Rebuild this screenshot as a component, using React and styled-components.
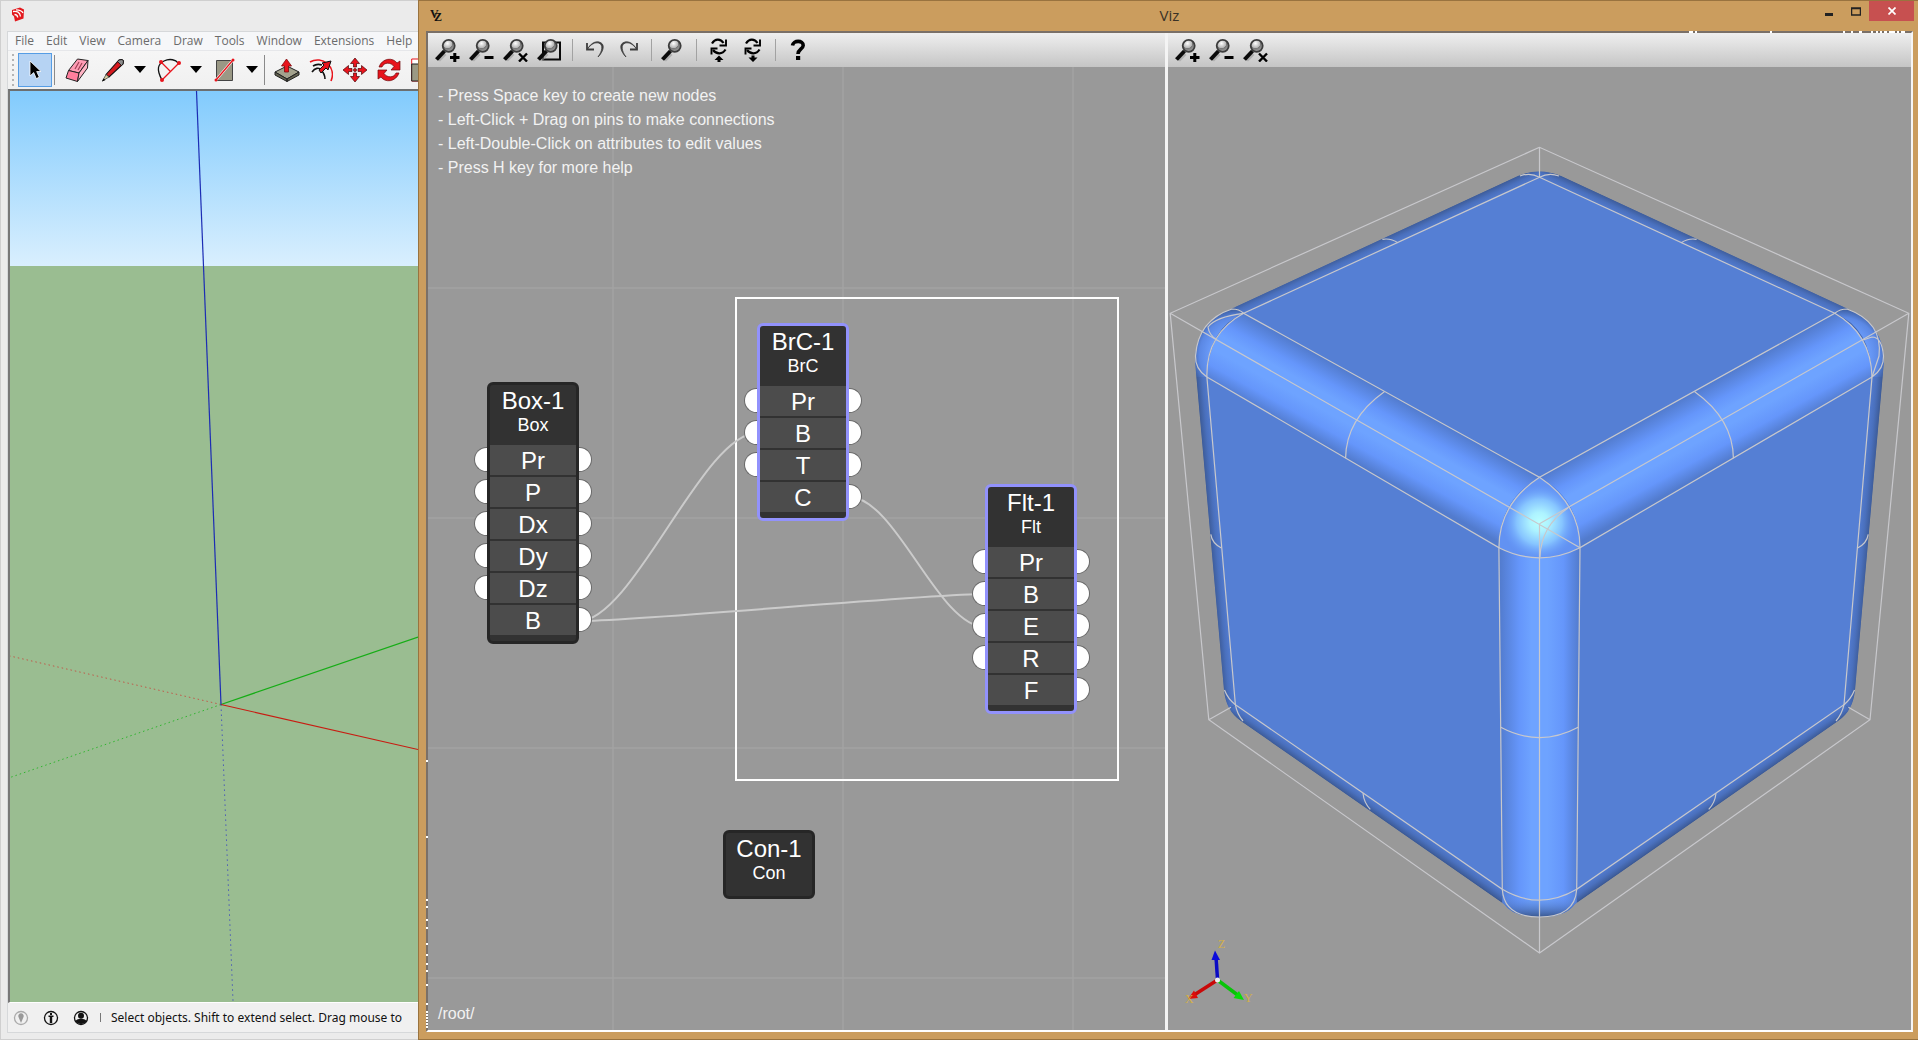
import React from 'react';
import styled, { createGlobalStyle } from 'styled-components';

const GlobalStyle = createGlobalStyle`
  * { box-sizing: border-box; }
  html, body, #root { height: 100%; }
  body { margin: 0; overflow: hidden; background: #ebebeb; }
  button { font: inherit; border: 0; padding: 0; background: none; color: inherit; }
  svg { display: block; flex: none; }
`;

const Desktop = styled.div`
  height: 100vh;
  display: grid;
  grid-template-columns: 418px minmax(0, 1fr);
`;

/* ---------- modelling window ---------- */

const ModelWindow = styled.section`
  min-width: 0;
  overflow: hidden;
  display: flex;
  flex-direction: column;
  padding: 0 0 6px 6px;
  background: #ebebeb;
  border: 1px solid #cfcfcf;
  border-right: 0;
  font-family: 'Open Sans', 'Noto Sans', sans-serif;
`;
const ModelTitle = styled.header`
  flex: 0 0 30px;
  padding: 6px 4px;
`;
const ModelBody = styled.div`
  flex: 1;
  min-height: 0;
  display: flex;
  flex-direction: column;
  border: 1px solid #d6d8da;
  border-right: 0;
  background: #f0f0f0;
`;
const MenuBar = styled.nav`
  flex: 0 0 19px;
  display: flex;
  align-items: center;
  gap: 12px;
  padding-left: 7px;
  background: #f6f7f9;
  border-bottom: 1px solid #e6e7ea;
`;
const MenuItem = styled.button`
  font-size: 12px;
  line-height: 18px;
  color: #6b6b6b;
  white-space: nowrap;
`;
const ModelToolbar = styled.div`
  flex: 0 0 38px;
  display: flex;
  align-items: center;
  gap: 2px;
  padding-left: 4px;
  background: linear-gradient(#f6f6f6, #f0f0f0);
  overflow: hidden;
`;
const Grip = styled.span`
  flex: 0 0 4px;
  height: 32px;
  background: repeating-linear-gradient(#b4b4b4 0 2px, transparent 2px 5px) 0 0 / 2px 100% no-repeat;
`;
const ToolGroup = styled.div`
  display: flex;
  flex: none;
`;
const Tool = styled.button`
  width: ${(p) => (p.$narrow ? 20 : 34)}px;
  height: 34px;
  flex: none;
  display: grid;
  place-items: center;
  background: ${(p) => (p.$active ? '#b6d3f3' : 'none')};
  border: ${(p) => (p.$active ? '1px solid #569de5' : '0')};
`;
const ToolDivider = styled.span`
  flex: 0 0 4px;
  height: 30px;
  border-left: 1px solid #8a8a8a;
`;
const Viewport = styled.div`
  flex: 1;
  min-height: 0;
  overflow: hidden;
  border-top: 2px solid #6c6f70;
  border-left: 2px solid #777;
  border-bottom: 1px solid #fff;
  background: linear-gradient(#82cbfd 0, #d9effe 175px, #9abd91 175px);
`;
const StatusBar = styled.footer`
  flex: 0 0 29px;
  display: flex;
  align-items: center;
  padding-left: 5px;
  gap: 14px;
  overflow: hidden;
  color: #111;
  font-family: 'Noto Sans', 'Open Sans', sans-serif;
  font-size: 12px;
  white-space: nowrap;
`;
const StatusDivider = styled.span`
  flex: 0 0 1px;
  height: 9px;
  margin: 0 -4px 0 -3px;
  background: #777;
`;

/* ---------- node editor window ---------- */

const VizWindow = styled.section`
  min-width: 0;
  display: flex;
  flex-direction: column;
  background: #cb9d5e;
  border: 1px solid #99733f;
  border-right: 0;
  padding: 0 5px 7px 7px;
`;
const VizTitle = styled.header`
  flex: 0 0 30px;
  display: grid;
  grid-template-columns: 1fr auto 1fr;
  margin: 0 -1px;
`;
const VizLogo = styled.div`
  padding: 7px 5px;
`;
const VizName = styled.h1`
  margin: 0;
  font: 400 15px/28px 'Open Sans', 'Noto Sans', sans-serif;
  color: #3a3226;
`;
const WindowControls = styled.div`
  display: flex;
  justify-content: flex-end;
  align-items: flex-start;
`;
const WindowButton = styled.button`
  width: ${(p) => (p.$close ? 45 : 27)}px;
  height: 20px;
  display: grid;
  place-items: center;
  background: ${(p) => (p.$close ? '#c75050' : 'none')};
`;
const VizBody = styled.div`
  position: relative;
  flex: 1;
  min-height: 0;
  display: grid;
  grid-template-columns: minmax(0, 737fr) 3px minmax(0, 743fr);
  border: 2px solid;
  border-color: #7a7068 #f6f6f6 #ffffff #7a7068;
`;
const TopMarks = styled.svg`
  position: absolute;
  right: 0;
  top: -2px;
`;
const SideMarks = styled.svg`
  position: absolute;
  left: -2px;
  bottom: 0;
`;
const PaneDivider = styled.div`
  background: #f4f4f4;
`;
const Pane = styled.div`
  min-width: 0;
  min-height: 0;
  display: flex;
  flex-direction: column;
`;
const VizToolbar = styled.div`
  flex: 0 0 34px;
  display: flex;
  align-items: center;
  padding-left: 3px;
  background: linear-gradient(#efefef, #c5c5c5);
`;
const VizTool = styled.button`
  width: 34px;
  height: 34px;
  display: grid;
  place-items: center;
`;
const VizToolDivider = styled.span`
  width: 1px;
  height: 22px;
  margin: 0 5px;
  background: #a2a2a2;
`;
const Canvas = styled.div`
  position: relative;
  flex: 1;
  min-height: 0;
  overflow: hidden;
  display: flex;
  flex-direction: column;
  justify-content: space-between;
  padding: 17px 10px 4px;
  background: #999999;
  color: #f2f2f2;
  font-family: 'Liberation Sans', Arial, sans-serif;
  font-size: 16px;
  line-height: 24px;
`;
const GraphLayer = styled.svg`
  position: absolute;
  inset: 0;
  width: 100%;
  height: 100%;
`;
const Hints = styled.ul`
  position: relative;
  margin: 0;
  padding: 0;
  list-style: none;
`;
const Path = styled.div`
  position: relative;
`;
const NodeBox = styled.article`
  position: absolute;
  left: ${(p) => p.$x}px;
  top: ${(p) => p.$y}px;
  width: 92px;
  border: 3px solid ${(p) => (p.$selected ? '#9292fc' : '#262626')};
  border-radius: 6px;
  background: #323232;
  color: #fff;
  text-align: center;
`;
const NodeHead = styled.header`
  height: ${(p) => (p.$alone ? 63 : 60)}px;
  padding-top: 3px;
`;
const NodeName = styled.h2`
  margin: 0;
  font-size: 24px;
  line-height: 26px;
  font-weight: 400;
  white-space: nowrap;
`;
const NodeType = styled.p`
  margin: 0;
  font-size: 18px;
  line-height: 22px;
`;
const Attributes = styled.ul`
  margin: 0;
  padding: 0 0 4px;
  list-style: none;
`;
const Attribute = styled.li`
  position: relative;
  height: 32px;
  border-bottom: 2px solid #323232;
  background: #4c4c4c;
  font-size: 24px;
  line-height: 32px;
`;
const Pin = styled.span`
  position: absolute;
  top: 2px;
  ${(p) => p.$side}: -16px;
  width: 13px;
  height: 25px;
  background: #fff;
  border: 1px solid #666;
  border-${(p) => (p.$side === 'left' ? 'right' : 'left')}: 0;
  border-radius: ${(p) => (p.$side === 'left' ? '13px 0 0 13px' : '0 13px 13px 0')};
`;
const Stage = styled.div`
  flex: 1;
  min-height: 0;
  background: #999999;
`;

/* ---------- icons ---------- */

const Lens = ({ id }) => (
  <>
    <defs>
      <radialGradient id={id} cx="0.4" cy="0.3" r="0.75">
        <stop offset="0" stopColor="#ffffff" />
        <stop offset="0.5" stopColor="#b5b5b5" />
        <stop offset="0.55" stopColor="#777" />
        <stop offset="1" stopColor="#a9a9a9" />
      </radialGradient>
    </defs>
    <path d="M3.5 22 10 15.5" stroke="#9b9b9b" strokeWidth="4" opacity="0.6" />
    <path d="M1.5 21.5 9.5 13" stroke="#0b0b0b" strokeWidth="4" />
    <circle cx="13.7" cy="7.8" r="6" fill={`url(#${id})`} stroke="#3c3c3c" strokeWidth="1.8" />
  </>
);
const ZoomIcon = ({ kind, id }) => (
  <svg width="26" height="24" viewBox="0 0 26 24" fill="none">
    {kind === 'fit' && <path d="M6 4.5h17v17H6z" stroke="#0a0a0a" strokeWidth="2" />}
    <Lens id={id} />
    {kind === 'in' && <path d="M15 19.5h9.5M19.8 15v9" stroke="#000" strokeWidth="3" />}
    {kind === 'out' && <path d="M15.5 19.5h9" stroke="#000" strokeWidth="3" />}
    {kind === 'reset' && <path d="m16 15.5 8 8M24 15.5l-8 8" stroke="#000" strokeWidth="2.4" />}
  </svg>
);
const UndoIcon = ({ flip }) => (
  <svg width="20" height="20" viewBox="0 0 20 20" fill="none" stroke="#3d3d3d" strokeWidth="1.8">
    <g transform={flip ? 'matrix(-1 0 0 1 20 0)' : undefined}>
      <path d="M2 3v6.5h7" />
      <path d="M2.500 9C6 4 10 2.200 13.500 3c5 1.300 4 8-.500 14 6-6 7.500-13.500 1-15C9.500 1 5.500 4 2.500 9Z" fill="#3d3d3d" strokeWidth="0.8" />
    </g>
  </svg>
);
const CycleIcon = ({ down }) => (
  <svg width="20" height="24" viewBox="0 0 20 24" fill="none">
    <path d="M3 5.500C6 .500 11.500 .500 14.500 5M16.500 11.500c-3 5-9 5-12.500 .500" stroke="#000" strokeWidth="2.200" />
    <path d="M17 1.500v6h-6.500M2.500 16.500V10.500h6" stroke="#000" strokeWidth="1.900" />
    <path d={down ? 'M10 24 5.500 19.500h3v-2h3v2h3Z' : 'M10 17.500 14.500 22h-3v2h-3v-2h-3Z'} fill="#000" />
  </svg>
);
const HelpIcon = () => (
  <svg width="18" height="24" viewBox="0 0 18 24" fill="none">
    <path d="M3.500 7.500C4 2 14.500 2 14.200 7.500 14 11 9.300 11 9 16" stroke="#000" strokeWidth="3.600" />
    <path d="M7 18h4.200v4H7z" fill="#000" />
  </svg>
);
const Caret = () => (
  <svg width="12" height="8" viewBox="0 0 12 8"><path d="M0 0h12L6 7Z" fill="#000" /></svg>
);
const arrowHeads = 'M12 0l4.500 5.500h-3V9h-3V5.500h-3Z';
const toolIcons = {
  Select: (
    <svg width="14" height="20" viewBox="0 0 14 20"><path d="M2 1v15l3.700-3.400 2.600 6 3-1.400-2.600-5.700H13Z" fill="#000" stroke="#fff" strokeWidth="0.800" /></svg>
  ),
  Eraser: (
    <svg width="24" height="24" viewBox="0 0 24 24" stroke="#222" strokeWidth="1" strokeLinejoin="round">
      <path d="M12.500 1 23 2.500 14 15 3.500 12.500Z" fill="#ff9cb4" /><path d="M3.500 12.500 14 15l-1.500 8.500L1 20Z" fill="#ff7f9d" /><path d="M14 15 23 2.500 22.500 10l-10 13.500Z" fill="#ffb3c4" /><path d="m14 4-4 7m7-6-4 7" stroke="#a04055" strokeWidth="1.200" />
    </svg>
  ),
  Line: (
    <svg width="24" height="24" viewBox="0 0 24 24">
      <path d="m5 16.500 13-14.500 3-.500 1.500 1.500-.500 3L8 19Z" fill="#d61a1f" stroke="#111" strokeWidth="1.100" /><path d="m18 2 3-.500 1.500 1.500-.500 3-1.500 1.500-4-4Z" fill="#8c8c8c" stroke="#111" strokeWidth="0.800" /><path d="m5 16.500 3 2.500-6.500 4Z" fill="#d8ce9f" stroke="#444" strokeWidth="0.800" /><path d="m1 23.500 1.500-3 2 1.500Z" fill="#000" />
    </svg>
  ),
  Arc: (
    <svg width="24" height="24" viewBox="0 0 24 24" fill="none">
      <path d="M5 22C-1 11 1 6 7 3s12-1 14 2" stroke="#111" strokeWidth="1.300" /><path d="m4 4 9 9m-8 9 17-17" stroke="#e8141c" strokeWidth="1.300" /><g fill="#e8141c"><circle cx="4" cy="4" r="2" /><circle cx="22" cy="5" r="2" /><circle cx="5" cy="22" r="2" /></g>
    </svg>
  ),
  Shape: (
    <svg width="22" height="24" viewBox="0 0 22 24"><path d="M2.500 2.500h16v20h-16z" fill="#9a9885" stroke="#444" /><path d="m2 22 17-20" stroke="#fff" strokeWidth="2.600" /><path d="m2 22 17-20" stroke="#e8141c" strokeWidth="1.300" /><circle cx="2" cy="22" r="1.500" fill="#e8141c" /><circle cx="19" cy="2" r="1.500" fill="#e8141c" /></svg>
  ),
  'Push/Pull': (
    <svg width="26" height="24" viewBox="0 0 26 24" stroke="#222"><path d="m1 14 12-6 12 6-12 7Z" fill="#a3a28d" /><path d="M1 14v3l12 6.500V21ZM25 14v3l-12 6.500V21Z" fill="#64634f" /><path d="m12.500 1 5 7h-3v6h-4V8h-3Z" fill="#e8141c" stroke="#7c0a0e" strokeWidth="0.800" /></svg>
  ),
  Offset: (
    <svg width="24" height="24" viewBox="0 0 24 24" fill="none"><path d="M1 4C13-3 28 9 22 23" stroke="#e8141c" strokeWidth="1.600" /><path d="M3 14c3-4 7-5 9-2 2 2 4 4 4 9M4 8c3-2 6-2 9-1" stroke="#111" strokeWidth="1.600" /><path d="m10 12 5-5-2-2 9-2-3 9-2-2-5 5Z" fill="#e8141c" stroke="#111" /></svg>
  ),
  Move: (
    <svg width="24" height="24" viewBox="0 0 24 24" fill="#e8141c" stroke="#4b0709" strokeWidth="0.700">{[0, 90, 180, 270].map((a) => <path key={a} d={arrowHeads} transform={`rotate(${a} 12 12)`} />)}<circle cx="12" cy="12" r="1.500" /></svg>
  ),
  Rotate: (
    <svg width="24" height="24" viewBox="0 0 24 24"><g fill="#e8141c" stroke="#6e0a0d" strokeWidth="0.700">{[0, 180].map((a) => <path key={a} d="M2 9C5 0 16-1 20 5l3-2v9h-9l3-3.500C14 4 7 4 5 9Z" transform={`rotate(${a} 12 12)`} />)}</g></svg>
  ),
  Scale: (
    <svg width="24" height="24" viewBox="0 0 24 24"><path d="M.7 1h22v22h-22z" fill="#fff" stroke="#e8141c" /><path d="M.7 6h16v17h-16z" fill="#9b9984" stroke="#222" /></svg>
  ),
};

const Logo = () => (
  <svg width="14" height="15" viewBox="0 0 14 15"><path d="M1 3 9 .5l4 2-.5 9-8.500 3-1-5-2-2Z" fill="#e3181d" /><path d="M2 4.500c4-.5 7 .5 7.500 5M3.500 7.500c2 0 3 .8 3.200 3M5 2.800c3 0 6 1 7 3.200" fill="none" stroke="#fff" strokeWidth="1.300" /></svg>
);

const Axes = () => (
  <svg width="100%" height="100%" viewBox="10 91 408 911" preserveAspectRatio="xMinYMin slice" fill="none">
    <g strokeWidth="1">
      <path d="M221 704.500 10 656" stroke="#c05a4a" strokeDasharray="1.500 3" />
      <path d="M221 704.500 10 777.500" stroke="#2fb52f" strokeDasharray="1.500 3" />
      <path d="M221 704.500 233 1001" stroke="#4858b8" strokeDasharray="1.500 3.500" />
      <path d="M221 704.500 418 637" stroke="#16ad16" strokeWidth="1.200" />
      <path d="M221 704.500 418 749.500" stroke="#c81c12" strokeWidth="1.200" />
      <path d="M221 704.500 196.500 91" stroke="#1c2cb4" strokeWidth="1.200" />
    </g>
  </svg>
);

/* ---------- rounded cube ---------- */

const gradients = [
  ['tl', 1391, 395, 1354, 462],
  ['tr', 1688, 395, 1725, 462],
  ['v', 1499.500, 600, 1579.500, 600],
];
const rims = [
  ['rTopL', 1397.800, 242.700, 1392.400, 230.900],
  ['rTopR', 1681.200, 242.700, 1686.600, 230.900],
  ['rL', 1221.700, 548, 1208.700, 549.100],
  ['rR', 1857.300, 548, 1870.300, 549.100],
  ['rBotL', 1363, 793, 1355.800, 803.400],
  ['rBotR', 1716, 793, 1723.200, 803.400],
];
const outline = 'M1518 176Q1539.500 167 1561 176L1848 309Q1884 325 1884 361L1855 690Q1853 711 1838 721L1575 904Q1566 917 1539.500 917Q1513 917 1504 904L1241 721Q1226 711 1224 690L1195 361Q1195 325 1231 309Z';

const Cube = () => (
  <svg width="100%" height="100%" viewBox="1168 67 743 963" fill="none">
    <defs>
      {gradients.map(([id, x1, y1, x2, y2]) => (
        <linearGradient key={id} id={id} gradientUnits="userSpaceOnUse" x1={x1} y1={y1} x2={x2} y2={y2}>
          <stop offset="0" stopColor="#527bcd" />
          <stop offset="0.250" stopColor="#6596fb" />
          <stop offset="0.400" stopColor="#6ea3ff" />
          <stop offset="0.600" stopColor="#6ea3ff" />
          <stop offset="0.800" stopColor="#6596fb" />
          <stop offset="1" stopColor="#527bcd" />
        </linearGradient>
      ))}
      {rims.map(([id, x1, y1, x2, y2]) => (
        <linearGradient key={id} id={id} gradientUnits="userSpaceOnUse" x1={x1} y1={y1} x2={x2} y2={y2}>
          <stop offset="0" stopColor="#527bcf" />
          <stop offset="0.400" stopColor="#4a70bd" />
          <stop offset="0.750" stopColor="#3f5f9f" />
          <stop offset="1" stopColor="#304a7c" />
        </linearGradient>
      ))}
      <radialGradient id="glow" gradientUnits="userSpaceOnUse" cx="1539.500" cy="522" r="38">
        <stop offset="0" stopColor="#bbffff" />
        <stop offset="0.250" stopColor="#adf3ff" />
        <stop offset="0.600" stopColor="#86c4ff" />
        <stop offset="1" stopColor="#689cff" stopOpacity="0" />
      </radialGradient>
      <linearGradient id="foot" gradientUnits="userSpaceOnUse" x1="1539" y1="893" x2="1539" y2="917">
        <stop offset="0" stopColor="#6a9cff" stopOpacity="0" />
        <stop offset="1" stopColor="#3a5890" />
      </linearGradient>
      {[['cornerL', 1237], ['cornerR', 1842]].map(([id, cx]) => (
        <radialGradient key={id} id={id} gradientUnits="userSpaceOnUse" cx={cx} cy="355" r="47">
          <stop offset="0.500" stopColor="#6ea0ff" />
          <stop offset="0.800" stopColor="#5b88e4" />
          <stop offset="1" stopColor="#3a5a98" />
        </radialGradient>
      ))}
      <clipPath id="body"><path d={outline} /></clipPath>
    </defs>
    <g clipPath="url(#body)">
      <path d={outline} fill="#4568b0" />
      <path d="M1539.500 177.300 1243.600 313.300 1225 300 1539.500 155Z" fill="url(#rTopL)" />
      <path d="M1539.500 177.300 1834.800 313.300 1855 300 1539.500 155Z" fill="url(#rTopR)" />
      <path d="M1206.900 377 1235.400 704.700 1220 712 1190 377Z" fill="url(#rL)" />
      <path d="M1872 377 1844 704.700 1859 712 1890 377Z" fill="url(#rR)" />
      <path d="M1235.400 704.700 1502.300 889.300 1502 912 1224 716Z" fill="url(#rBotL)" />
      <path d="M1844 704.700 1576.700 889.300 1577 912 1855 716Z" fill="url(#rBotR)" />
      <path d="M1195 377V320L1222 300 1243.600 313.300Q1208 328 1206.900 377Z" fill="url(#cornerL)" />
      <path d="M1884 377V320L1857 300 1834.800 313.300Q1871 328 1872 377Z" fill="url(#cornerR)" />
      <path d="M1243.600 313.300 1539.500 477.300Q1499 500 1498.900 547.700L1206.900 377Q1208 332 1243.600 313.300Z" fill="url(#tl)" />
      <path d="M1834.800 313.300 1539.500 477.300Q1580 500 1580 547.700L1872 377Q1871 332 1834.800 313.300Z" fill="url(#tr)" />
      <path d="M1498.900 547.700 1539.500 510 1580 547.700 1576.700 889.300V920H1502.300V889.300Z" fill="url(#v)" />
      <path d="M1498.900 547.700Q1499 500 1539.500 477.300Q1580 500 1580 547.700Q1539.500 568 1498.900 547.700Z" fill="#6292f2" />
      <path d="M1498.900 547.700Q1499 500 1539.500 477.300Q1580 500 1580 547.700Q1539.500 568 1498.900 547.700Z" fill="url(#glow)" />
      <path d="M1539.500 177.300 1834.800 313.300 1539.500 477.300 1243.600 313.300Z" fill="#557fd4" />
      <path d="M1206.900 377 1498.900 547.700 1502.300 889.300 1235.400 704.700Z" fill="#557fd4" />
      <path d="M1872 377 1580 547.700 1576.700 889.300 1844 704.700Z" fill="#557fd4" />
      <path d="M1502 889Q1539.500 910 1577 889V918H1502Z" fill="url(#foot)" />
    </g>
    <g stroke="#c8c8cc" strokeWidth="1.200">
      <path d="M1539.500 147.300 1170.200 313.300 1208.800 719.700 1539.500 953 1870 719.700 1908.800 313.300ZM1539.500 147.300V177.300M1539.500 523.700V953M1170.200 313.300 1580 547.700M1908.800 313.300 1539.500 523.700M1208.800 719.700 1231 707.300M1870 719.700 1848.400 707.300" />
      <path d="M1539.500 177.300 1834.800 313.300 1539.500 477.300 1243.600 313.300ZM1206.900 377 1498.900 547.700 1502.300 889.300 1235.400 704.700ZM1872 377 1580 547.700 1576.700 889.300 1844 704.700Z" />
      <path d="M1384.300 391.700Q1346 419 1345.600 458.300M1694.700 391.700Q1733 419 1733.400 458.300" />
      <path d="M1498.900 547.700Q1499 504 1539.500 477.300Q1580 504 1580 547.700Q1539.500 568 1498.900 547.700" />
      <path d="M1568 508Q1541 526 1540 557" />
      <path d="M1500.800 727.300Q1539.500 748 1578.200 727.300M1502.300 889.300Q1539.500 911 1576.700 889.300" />
      <path d="M1502.300 889.300Q1504 917 1539.500 917Q1575 917 1576.700 889.300" />
      <path d="M1243.600 313.300Q1206 334 1206.900 377M1834.800 313.300Q1871 334 1872 377" />
      <path d="M1206.900 377Q1195 369 1195.500 356Q1198 320 1232 309Q1239 309 1243.600 313.300Q1215 317 1208 327Q1209 335 1217 340" />
      <path d="M1872 377Q1884 369 1883.500 356Q1882 337 1872 337L1863 340M1834.800 313.300Q1840 309 1847 309Q1883 322 1879 356L1872 377" />
      <path d="M1520 176Q1530 172 1539.500 177.300Q1549 172 1559 176" />
      <path d="M1382.400 239.300Q1391 238 1397.800 242.700M1696.600 239.300Q1688 238 1681.200 242.700" />
      <path d="M1210.800 534.300Q1212 543 1221.400 548M1868.200 534.300Q1867 543 1857.600 548M1363 793.300Q1364 803 1370.300 809.300M1716 793.300Q1715 803 1708.700 809.300" />
      <path d="M1224.500 690Q1228 699 1235.400 704.700Q1237 714 1243 721M1854.500 690Q1851 699 1844 704.700Q1842 714 1836 721" />
    </g>
    <g strokeLinecap="butt">
      <path d="M1217.500 979 1216 957" stroke="#0b0bc4" strokeWidth="3.500" />
      <path d="M1215 950.500 1211.500 960h8.500Z" fill="#0b0bdc" />
      <path d="M1217.500 980 1194 995" stroke="#c90808" strokeWidth="3.500" />
      <path d="M1188 999 1194 990.500 1198 998Z" fill="#dc0b0b" />
      <path d="M1217.500 980 1239 996" stroke="#08c408" strokeWidth="3.500" />
      <path d="M1244 1000 1233.500 998 1239 991Z" fill="#08dc08" />
      <circle cx="1217.500" cy="980" r="2.500" fill="#eee" />
    </g>
    <g fill="#d3b04a" fontFamily="'Liberation Serif', serif" fontSize="12">
      <text x="1218" y="948">Z</text>
      <text x="1185" y="1003">X</text>
      <text x="1244" y="1002">Y</text>
    </g>
  </svg>
);

/* ---------- data ---------- */

const menus = ['File', 'Edit', 'View', 'Camera', 'Draw', 'Tools', 'Window', 'Extensions', 'Help'];
const hints = [
  '- Press Space key to create new nodes',
  '- Left-Click + Drag on pins to make connections',
  '- Left-Double-Click on attributes to edit values',
  '- Press H key for more help',
];
const nodes = [
  { name: 'Box-1', type: 'Box', x: 59, y: 315, rows: ['Pr', 'P', 'Dx', 'Dy', 'Dz', 'B'], noInput: ['B'] },
  { name: 'BrC-1', type: 'BrC', x: 329, y: 256, rows: ['Pr', 'B', 'T', 'C'], noInput: ['C'], selected: true },
  { name: 'Flt-1', type: 'Flt', x: 557, y: 417, rows: ['Pr', 'B', 'E', 'R', 'F'], noInput: ['F'], selected: true },
  { name: 'Con-1', type: 'Con', x: 295, y: 763, rows: [] },
];
const topMarks = [[4, 4], [10, 2], [85, 2], [158, 2], [166, 2], [174, 3], [186, 2], [191, 2], [195, 2], [199, 3], [204, 6], [212, 2], [216, 4]];
const sideMarks = [8, 84, 147, 154, 167, 175, 191, 202, 211, 218, 232, 251, 259, 262, 265, 268, 271, 274];

const MagTools = ({ kinds, prefix }) =>
  kinds.map(([kind, label]) => (
    <VizTool key={kind} aria-label={label}><ZoomIcon kind={kind} id={prefix + kind} /></VizTool>
  ));
const zoomKinds = [['in', 'Zoom in'], ['out', 'Zoom out'], ['reset', 'Reset zoom']];

const GraphNode = ({ node }) => (
  <NodeBox $x={node.x} $y={node.y} $selected={node.selected}>
    <NodeHead $alone={!node.rows.length}>
      <NodeName>{node.name}</NodeName>
      <NodeType>{node.type}</NodeType>
    </NodeHead>
    {node.rows.length > 0 && (
      <Attributes>
        {node.rows.map((r) => (
          <Attribute key={r}>
            {!node.noInput.includes(r) && <Pin $side="left" />}
            {r}
            <Pin $side="right" />
          </Attribute>
        ))}
      </Attributes>
    )}
  </NodeBox>
);

const StatusIcon = ({ kind }) => (
  <svg width="16" height="16" viewBox="0 0 16 16">
    <circle cx="8" cy="8" r="6.500" fill="none" stroke={kind === 'geo' ? '#aaa' : '#111'} strokeWidth="1.300" />
    {kind === 'geo' && <path d="M8 13 5.500 7a2.700 2.700 0 1 1 5 0Z" fill="#999" />}
    {kind === 'credits' && <path d="M7 3h2v2H7zM5.500 5.500h5v1.500H9.200V13H6.800V7H5.500Z" fill="#111" />}
    {kind === 'user' && <><circle cx="8" cy="5.800" r="3" fill="#111" /><path d="M2.500 11c2-3 9-3 11 0-2 4-9 4-11 0Z" fill="#111" /></>}
  </svg>
);

export default function App() {
  return (
    <>
      <GlobalStyle />
      <Desktop>
        <ModelWindow aria-label="Modelling window">
          <ModelTitle><Logo /></ModelTitle>
          <ModelBody>
            <MenuBar>{menus.map((m) => <MenuItem key={m}>{m}</MenuItem>)}</MenuBar>
            <ModelToolbar>
              <Grip />
              <Tool $active aria-label="Select">{toolIcons.Select}</Tool>
              <ToolDivider />
              <Tool aria-label="Eraser">{toolIcons.Eraser}</Tool>
              {['Line', 'Arc', 'Shape'].map((t) => (
                <ToolGroup key={t}>
                  <Tool aria-label={t}>{toolIcons[t]}</Tool>
                  <Tool $narrow aria-label={`${t} options`}><Caret /></Tool>
                </ToolGroup>
              ))}
              <ToolDivider />
              <ToolGroup>
                {['Push/Pull', 'Offset', 'Move', 'Rotate', 'Scale'].map((t) => (
                  <Tool key={t} aria-label={t}>{toolIcons[t]}</Tool>
                ))}
              </ToolGroup>
            </ModelToolbar>
            <Viewport><Axes /></Viewport>
            <StatusBar>
              <StatusIcon kind="geo" />
              <StatusIcon kind="credits" />
              <StatusIcon kind="user" />
              <StatusDivider />
              <span>Select objects. Shift to extend select. Drag mouse to</span>
            </StatusBar>
          </ModelBody>
        </ModelWindow>

        <VizWindow aria-label="Viz">
          <VizTitle>
            <VizLogo>
              <svg width="14" height="15" viewBox="0 0 14 15" fontFamily="'Liberation Serif', serif" fontWeight="700" fill="#111">
                <text x="0" y="10" fontSize="12">V</text>
                <text x="4" y="13" fontSize="12">Z</text>
              </svg>
            </VizLogo>
            <VizName>Viz</VizName>
            <WindowControls>
              <WindowButton aria-label="Minimize"><svg width="8" height="12"><path d="M0 8h8v3H0z" fill="#222" /></svg></WindowButton>
              <WindowButton aria-label="Maximize"><svg width="10" height="9"><path d="M.5 1.500h9v6.500h-9zM0 1h10" fill="none" stroke="#222" strokeWidth="1.500" /></svg></WindowButton>
              <WindowButton $close aria-label="Close"><svg width="8" height="8"><path d="m.5.5 7 7m0-7-7 7" stroke="#fff" strokeWidth="1.700" /></svg></WindowButton>
            </WindowControls>
          </VizTitle>
          <VizBody>
            <Pane>
              <VizToolbar>
                <MagTools prefix="graph-" kinds={[...zoomKinds, ['fit', 'Zoom to fit']]} />
                <VizToolDivider />
                <VizTool aria-label="Undo"><UndoIcon /></VizTool>
                <VizTool aria-label="Redo"><UndoIcon flip /></VizTool>
                <VizToolDivider />
                <MagTools prefix="graph-" kinds={[['find', 'Find']]} />
                <VizToolDivider />
                <VizTool aria-label="Refresh up"><CycleIcon /></VizTool>
                <VizTool aria-label="Refresh down"><CycleIcon down /></VizTool>
                <VizToolDivider />
                <VizTool aria-label="Help"><HelpIcon /></VizTool>
              </VizToolbar>
              <Canvas>
                <GraphLayer fill="none">
                  <path d="M185 0V2000M415 0V2000M645 0V2000M0 221H3000M0 451H3000M0 681H3000M0 911H3000" stroke="#a3a3a3" strokeWidth="1.500" />
                  <path d="M308 231H690V713H308Z" stroke="#fff" strokeWidth="2" />
                  <g stroke="#cbcbcb" strokeWidth="2">
                    <path d="M151 554C205 554 275 366 329 366" />
                    <path d="M421 430C468 430 510 560 557 560" />
                    <path d="M151 554C211 554 497 527 557 527" />
                  </g>
                </GraphLayer>
                <Hints>{hints.map((h) => <li key={h}>{h}</li>)}</Hints>
                {nodes.map((n) => <GraphNode key={n.name} node={n} />)}
                <Path>/root/</Path>
              </Canvas>
            </Pane>
            <PaneDivider />
            <Pane>
              <VizToolbar><MagTools prefix="view-" kinds={zoomKinds} /></VizToolbar>
              <Stage><Cube /></Stage>
            </Pane>
            <TopMarks width="226" height="2" fill="#fff" aria-hidden="true">
              {topMarks.map(([x, w]) => <rect key={x} x={x} width={w} height="2" />)}
            </TopMarks>
            <SideMarks width="2" height="278" fill="#fff" aria-hidden="true">
              {sideMarks.map((y) => <rect key={y} y={y} width="2" height="2" />)}
            </SideMarks>
          </VizBody>
        </VizWindow>
      </Desktop>
    </>
  );
}
